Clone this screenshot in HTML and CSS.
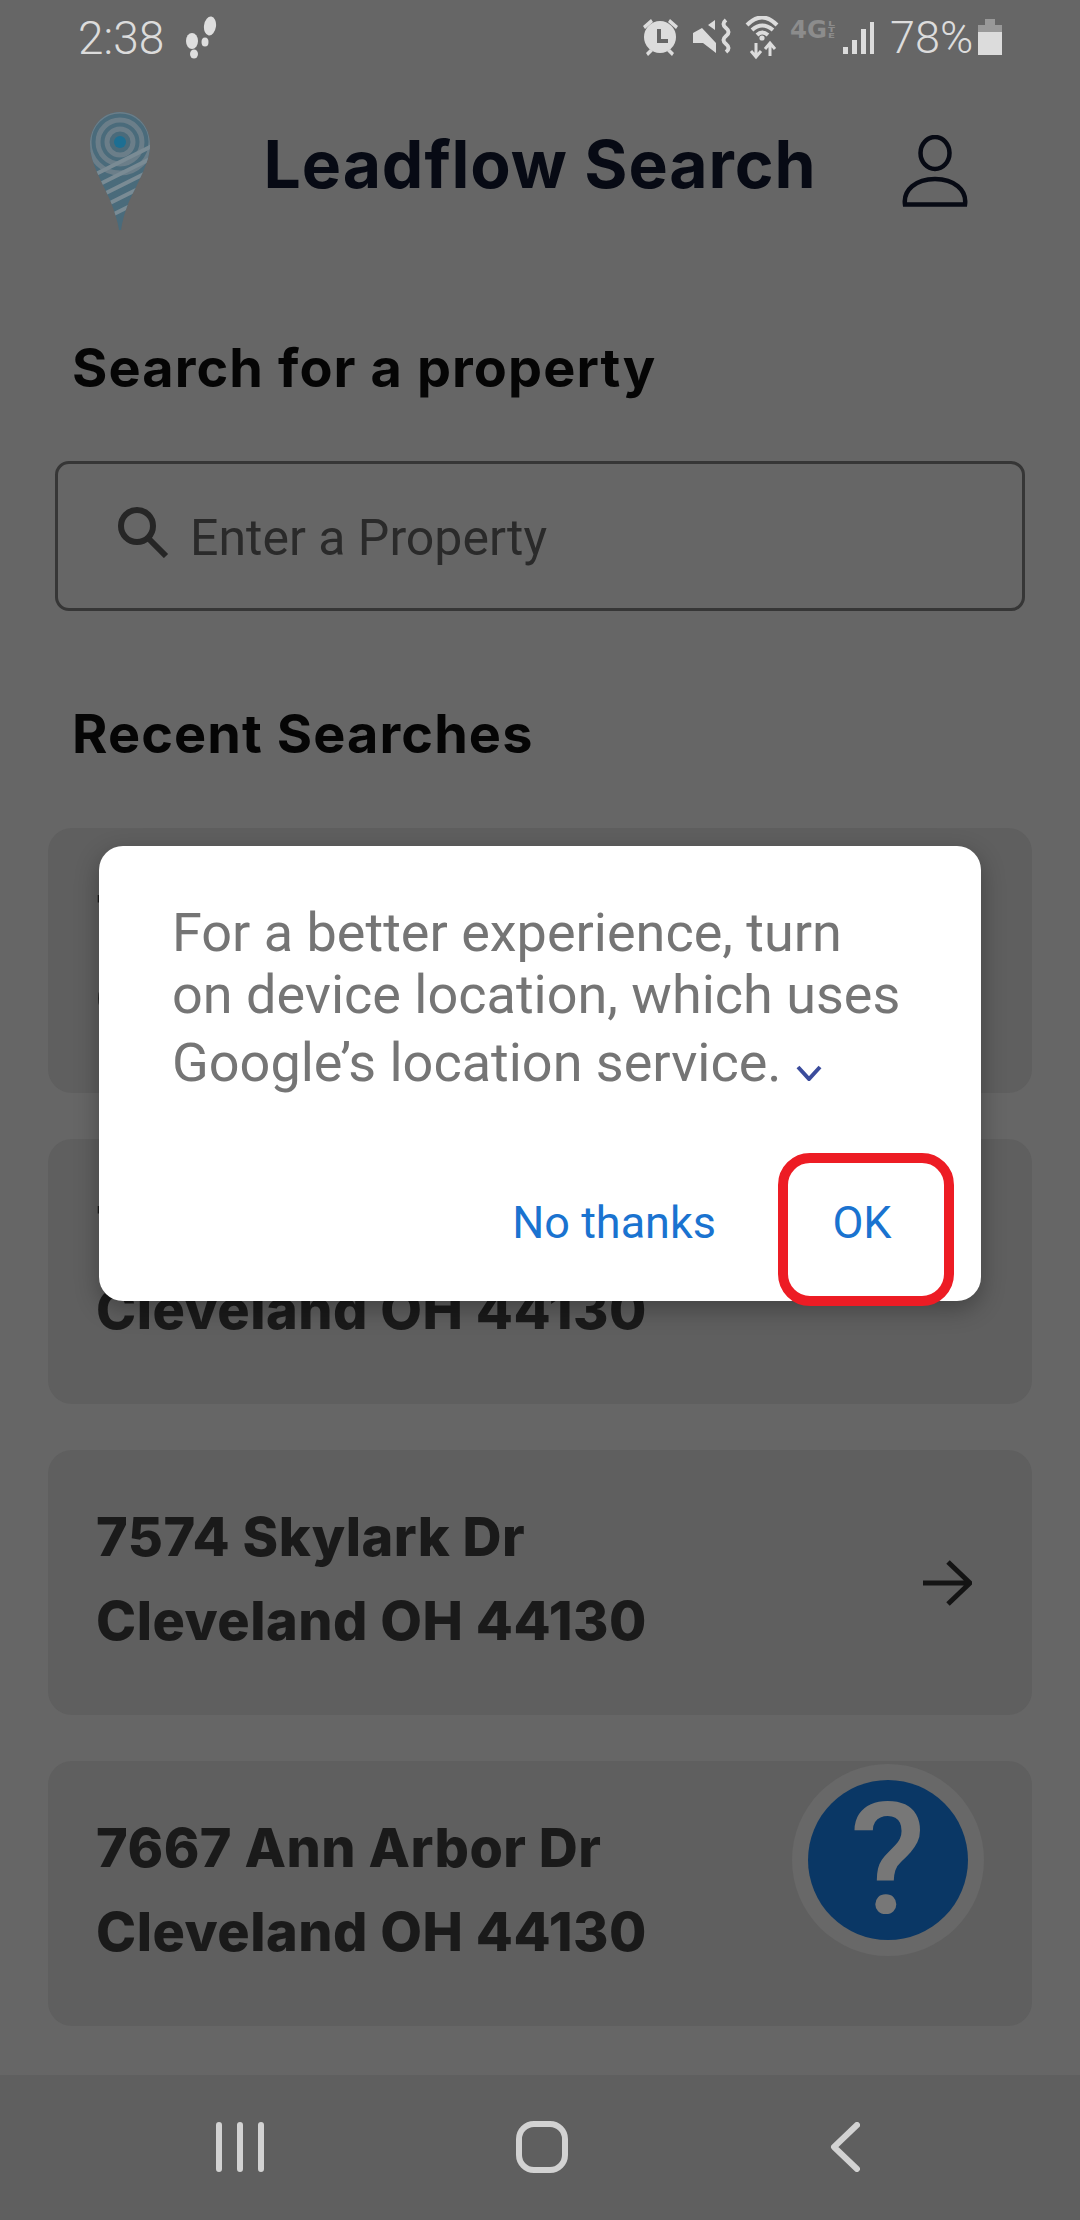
FILE: index.html
```html
<!DOCTYPE html>
<html lang="en">
<head>
<meta charset="utf-8">
<title>Leadflow Search</title>
<link rel="stylesheet" href="styles.css">
</head>
<body>
<div class="phone">
  <div class="status">
    <div class="status-left">
      <span class="time">2:38</span>
      <svg class="steps" viewBox="0 0 36 44" aria-hidden="true">
        <ellipse cx="9" cy="25" rx="6" ry="8"/>
        <ellipse cx="11" cy="38" rx="4" ry="4.5"/>
        <ellipse cx="27" cy="10" rx="6" ry="9.5" transform="rotate(8 27 10)"/>
        <ellipse cx="22" cy="26" rx="3.5" ry="4.5"/>
      </svg>
    </div>
    <div class="status-right">
      <svg class="cluster" viewBox="0 0 232 44" aria-hidden="true">
        <g class="ic-fill">
          <circle cx="18" cy="21" r="16"/>
          <path d="M1 10 9 3 11 6 3 13ZM28 3 36 10 34 13 26 6ZM4 37 8 33 11 35 6 40ZM32 37 28 33 25 35 30 40Z"/>
          <path d="M51 17 60 12 74 27V37L61 27H51ZM73 4V14L66 9Z"/>
          <circle cx="120" cy="22" r="2.6"/>
        </g>
        <path class="ic-hand" d="M17 13V25H26"/>
        <path class="ic-line" d="M84 4q-5 4 0 8q5 4 0 8q-5 4 0 8q5 4 0 8"/>
        <path class="ic-line" d="M105 9Q120-6 135 9M110 14Q120 5 131 14M115 19Q120 14 126 19"/>
        <path class="ic-thin" d="M114 27V41M109 35 114 41 119 35M128 40V27M123 33 128 27 133 33"/>
        <text class="ic-4g" x="148" y="22" textLength="37" lengthAdjust="spacingAndGlyphs">4G</text>
        <text class="ic-lte" x="186" y="10" textLength="7" lengthAdjust="spacingAndGlyphs">L</text>
        <text class="ic-lte" x="186" y="16" textLength="7" lengthAdjust="spacingAndGlyphs">T</text>
        <text class="ic-lte" x="186" y="22" textLength="7" lengthAdjust="spacingAndGlyphs">E</text>
        <g class="ic-fill">
          <rect x="201" y="31" width="5" height="7"/>
          <rect x="210" y="24" width="5" height="14"/>
          <rect x="219" y="13" width="5" height="25"/>
          <rect x="228" y="6" width="4" height="32"/>
        </g>
      </svg>
      <span class="batt-text">78%</span>
      <svg class="batt" viewBox="0 0 24 36" aria-hidden="true">
        <rect class="batt-empty" x="7" y="0" width="10" height="6"/>
        <rect class="batt-empty" x="0" y="6" width="24" height="7"/>
        <rect class="batt-full" x="0" y="13" width="24" height="23"/>
      </svg>
    </div>
  </div>

  <header class="app-head">
    <svg class="logo" viewBox="0 0 60 118" aria-hidden="true">
      <defs>
        <clipPath id="pin"><path d="M30 0C47 0 60 14 60 33 60 50 48 70 38 92 35 100 32 110 31 118H29C28 110 24 98 20 88 12 70 0 50 0 33 0 14 13 0 30 0Z"/></clipPath>
      </defs>
      <g clip-path="url(#pin)">
        <rect class="logo-bg" width="60" height="118"/>
        <circle class="logo-ring" cx="30" cy="30" r="13"/>
        <circle class="logo-ring" cx="30" cy="30" r="22"/>
        <circle class="logo-ring" cx="30" cy="30" r="31"/>
        <path class="logo-stripe" d="M6 62 62 34M10 72 66 44M14 82 66 56M18 92 66 68M24 102 60 84"/>
      </g>
      <circle class="logo-dot" cx="30" cy="30" r="6"/>
    </svg>
    <h1 class="title">Leadflow Search</h1>
    <svg class="user" viewBox="0 0 66 72" aria-hidden="true">
      <ellipse cx="33" cy="18" rx="14.5" ry="16"/>
      <path d="M3 69.500C1 55 14 44 33 44S65 55 63 69.500Z"/>
    </svg>
  </header>

  <main class="content">
    <h2 class="section-title">Search for a property</h2>
    <div class="search-box">
      <svg class="search-icon" viewBox="0 0 52 52" aria-hidden="true">
        <circle cx="20" cy="20" r="16"/>
        <path d="M31 32 49 50"/>
      </svg>
      <span class="placeholder">Enter a Property</span>
    </div>
    <h2 class="section-title recent">Recent Searches</h2>
    <div class="cards">
      <div class="card"><div class="addr"><div>7574 Skylark Dr</div><div>Cleveland OH 44130</div></div></div>
      <div class="card"><div class="addr"><div>7574 Skylark Dr</div><div>Cleveland OH 44130</div></div></div>
      <div class="card">
        <div class="addr"><div>7574 Skylark Dr</div><div>Cleveland OH 44130</div></div>
        <svg class="arrow" viewBox="0 0 50 46" aria-hidden="true"><path d="M1 23H47M26 2 48 23 26 44"/></svg>
      </div>
      <div class="card"><div class="addr"><div>7667 Ann Arbor Dr</div><div>Cleveland OH 44130</div></div></div>
    </div>
  </main>

  <nav class="navbar">
    <svg class="nav-recent" viewBox="0 0 48 50" aria-hidden="true"><path d="M3 3V47M24 3V47M45 3V47"/></svg>
    <svg class="nav-home" viewBox="0 0 52 52" aria-hidden="true"><rect x="3" y="3" width="46" height="46" rx="15"/></svg>
    <svg class="nav-back" viewBox="0 0 30 50" aria-hidden="true"><path d="M27 3 4 25 27 47"/></svg>
  </nav>

  <div class="fab"><div class="fab-inner">?</div></div>

  <div class="dialog">
    <p class="dialog-text">
      <span class="dl">For a better experience, turn</span>
      <span class="dl dl-2">on device location, which uses</span>
      <span class="dl dl-3">Google’s location service.<svg class="chev" viewBox="0 0 26 16" aria-hidden="true"><path d="M2 2 13 14 24 2"/></svg></span>
    </p>
    <div class="dialog-actions">
      <span class="btn btn-no">No thanks</span>
      <span class="btn btn-ok">OK</span>
    </div>
  </div>
</div>
</body>
</html>
```
FILE: styles.css
```css
* { box-sizing: border-box; }
html, body { margin: 0; padding: 0; }
body { background: #666; }

.phone {
  position: relative;
  width: 1080px;
  height: 2220px;
  overflow: hidden;
  background: #666;
  display: flex;
  flex-direction: column;
  font-family: "Inter", "Liberation Sans", sans-serif;
}

/* status bar */
.status {
  height: 76px;
  padding: 0 78px;
  display: flex;
  justify-content: space-between;
  align-items: flex-start;
  color: #dcdcdc;
  font-family: "Roboto", sans-serif;
}
.status-left { display: flex; padding-top: 14px; }
.time { font-size: 46px; line-height: 48px; font-weight: 300; }
.steps { width: 36px; height: 44px; margin: 2px 0 0 19px; fill: #dedede; }
.status-right { display: flex; padding-top: 16px; }
.cluster { width: 232px; height: 44px; }
.ic-fill { fill: #dcdcdc; }
.ic-hand { fill: none; stroke: #666; stroke-width: 4; }
.ic-line { fill: none; stroke: #dcdcdc; stroke-width: 4; }
.ic-thin { fill: none; stroke: #dcdcdc; stroke-width: 3; }
.ic-4g { font-family: "DejaVu Sans", sans-serif; font-weight: 700; font-size: 24px; fill: #8c8c8c; }
.ic-lte { font-family: "DejaVu Sans", sans-serif; font-weight: 700; font-size: 7px; fill: #8c8c8c; }
.batt-text { font-size: 45px; line-height: 48px; font-weight: 300; margin: -2px 0 0 16px; width: 80px; white-space: nowrap; }
.batt { width: 24px; height: 36px; margin: 3px 0 0 8px; }
.batt-empty { fill: #999; }
.batt-full { fill: #dcdcdc; }

/* header */
.app-head {
  height: 190px;
  padding: 0 112px 0 90px;
  display: flex;
  align-items: center;
  justify-content: space-between;
}
.logo { width: 60px; height: 118px; flex: none; }
.logo-bg { fill: #4a6b7b; }
.logo-ring { fill: none; stroke: #6b7e89; stroke-width: 5; }
.logo-stripe { fill: none; stroke: #7a8b94; stroke-width: 4; }
.logo-dot { fill: #1d6f93; }
.title {
  margin: 0 0 14px 28px;
  font-size: 66px;
  line-height: 72px;
  font-weight: 700;
  letter-spacing: .9px;
  color: #070a14;
  white-space: nowrap;
}
.user { width: 66px; height: 72px; flex: none; fill: none; stroke: #070a14; stroke-width: 4.500; }

/* content */
.content { padding: 67px 48px 0; flex: 1; }
.section-title {
  margin: 0 0 0 24px;
  font-size: 54px;
  line-height: 70px;
  font-weight: 700;
  letter-spacing: 1.100px;
  color: #050505;
}
.search-box {
  margin: 58px 7px 0;
  height: 150px;
  border: 3px solid #363636;
  border-radius: 14px;
  display: flex;
  align-items: center;
  padding-left: 59px;
}
.search-icon { width: 52px; height: 52px; fill: none; stroke: #262626; stroke-width: 6; flex: none; margin-top: -8px; }
.placeholder { margin-left: 21px; padding-top: 4px; font-size: 50px; color: #2a2a2a; font-family: "Roboto", sans-serif; }
.recent { margin-top: 88px; }
.cards { margin-top: 59px; display: flex; flex-direction: column; gap: 46px; }
.card {
  height: 265px;
  background: #5f5f5f;
  border-radius: 24px;
  padding: 0 60px 8px 48px;
  display: flex;
  align-items: center;
  justify-content: space-between;
}
.addr { font-size: 54px; line-height: 84px; font-weight: 800; letter-spacing: .5px; color: #1a1a1a; white-space: nowrap; }
.arrow { width: 50px; height: 46px; fill: none; stroke: #141414; stroke-width: 5; flex: none; margin-top: 8px; }

/* nav bar */
.navbar {
  height: 145px;
  background: #5f5f5f;
  display: flex;
  padding: 47px 0 0 216px;
  align-items: flex-start;
  flex: none;
}
.nav-recent { width: 48px; height: 50px; fill: none; stroke: #d2d2d2; stroke-width: 6; stroke-linecap: round; }
.nav-home { width: 52px; height: 52px; margin: -1px 0 0 252px; fill: none; stroke: #d2d2d2; stroke-width: 6; }
.nav-back { width: 30px; height: 50px; margin-left: 262px; fill: none; stroke: #d2d2d2; stroke-width: 6; stroke-linecap: round; stroke-linejoin: round; }

/* floating help */
.fab {
  position: absolute;
  left: 792px;
  top: 1764px;
  width: 192px;
  height: 192px;
  border-radius: 50%;
  background: #686868;
  display: flex;
  align-items: center;
  justify-content: center;
}
.fab-inner {
  width: 160px;
  height: 160px;
  border-radius: 50%;
  background: #0a3765;
  color: #777;
  font-family: "Roboto", sans-serif;
  font-weight: 500;
  font-size: 156px;
  line-height: 160px;
  text-align: center;
}

/* dialog */
.dialog {
  position: absolute;
  left: 99px;
  top: 846px;
  width: 882px;
  height: 455px;
  background: #fff;
  border-radius: 24px;
  box-shadow: 0 8px 24px rgba(0, 0, 0, .3);
  padding: 56px 0 0 73px;
  font-family: "Roboto", sans-serif;
}
.dialog-text { margin: 0; color: #757575; font-size: 54px; line-height: 62px; }
.dl { display: block; white-space: nowrap; }
.dl-3 { margin-top: 6px; }
.chev { width: 26px; height: 16px; margin-left: 14px; fill: none; stroke: #3b4c9c; stroke-width: 4; }
.dialog-actions { position: absolute; right: 27px; top: 307px; display: flex; align-items: center; }
.btn { font-size: 45px; line-height: 50px; font-weight: 400; color: #1a73d0; }
.btn-no { margin-bottom: 14px; }
.btn-ok {
  margin-left: 62px;
  width: 176px;
  height: 153px;
  border: 10px solid #ed1c24;
  border-radius: 32px;
  display: flex;
  align-items: center;
  justify-content: center;
  padding: 0 8px 14px 0;
}
```
